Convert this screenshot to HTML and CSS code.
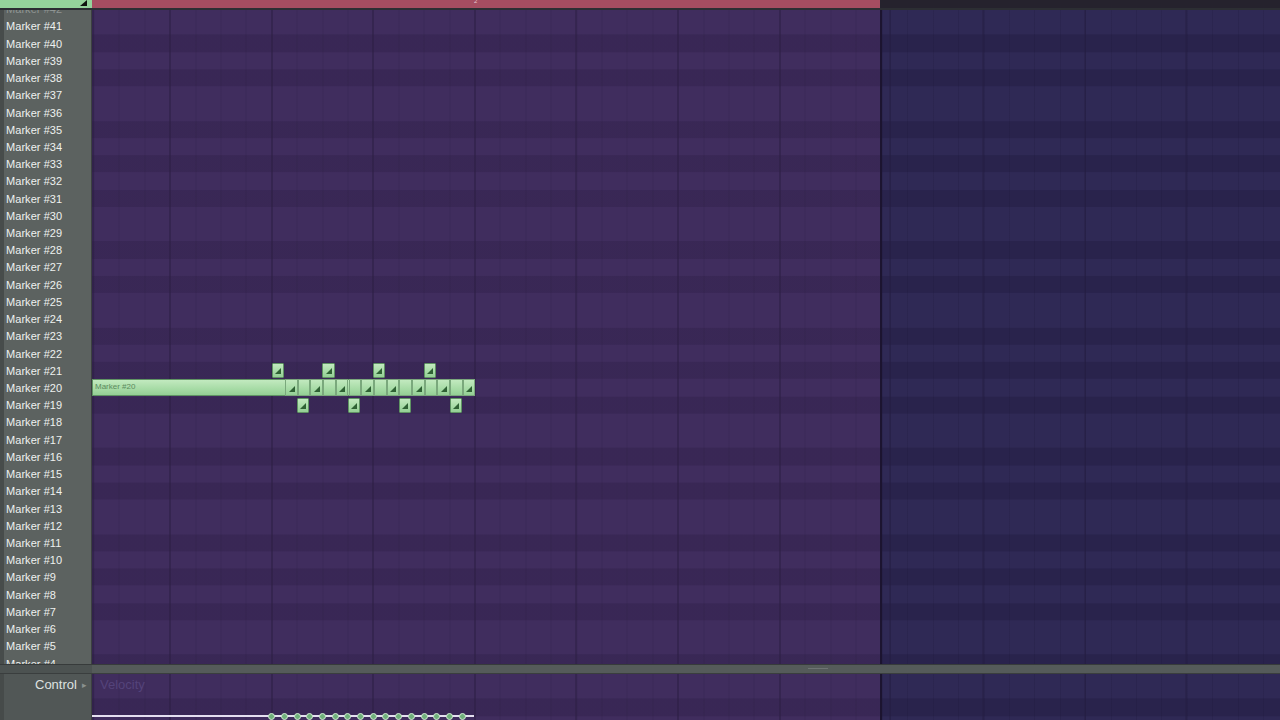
FILE: index.html
```html
<!DOCTYPE html>
<html>
<head>
<meta charset="utf-8">
<link rel="stylesheet" href="styles.css">
</head>
<body>
<div class="app">
  <div class="topbar">
    <div class="tb-left"><span class="tb-tri"></span></div>
    <div class="tb-song"><span class="tb-num">2</span></div>
    <div class="tb-rest"></div>
  </div>
  <div class="sep"></div>
  <div class="main">
    <div class="keys">
      <div class="key-list" id="keys"></div>
    </div>
    <div class="grid">
      <div class="pane pane-song"></div>
      <div class="pane pane-rest"></div>
      <div class="notes" id="notes">
        <div class="note long"><span class="note-label">Marker #20</span></div>
      </div>
    </div>
  </div>
  <div class="scroll"><div class="scroll-left"></div><div class="scroll-track"><span class="grip"></span></div></div>
  <div class="control">
    <div class="ctl-label"><span class="ctl-text">Control</span><span class="ctl-arrow">▸</span></div>
    <div class="vel">
      <div class="pane pane-song"></div>
      <div class="pane pane-rest"></div>
      <span class="vel-title">Velocity</span>
      <div class="vel-line"></div>
      <div class="vel-dots" id="dots"></div>
    </div>
  </div>
</div>
<script src="app.js"></script>
</body>
</html>
```
FILE: app.js
```js
(function () {
  var keys = document.getElementById('keys');
  for (var n = 42; n >= 4; n--) {
    var d = document.createElement('div');
    d.className = 'key';
    d.textContent = 'Marker #' + n;
    keys.appendChild(d);
  }
  var notes = document.getElementById('notes');
  function add(cls, left, top) {
    var e = document.createElement('div');
    e.className = 'note ' + cls;
    e.style.left = left + 'px';
    e.style.top = top + 'px';
    notes.appendChild(e);
  }
  var step = 12.7;
  for (var i = 0; i < 15; i++) {
    add(i % 2 === 0 ? 'cell tri' : 'cell', 193 + i * step, 369);
  }
  [179.6, 230.4, 281.2, 332].forEach(function (x) { add('short tri', x, 353); });
  [205.2, 256, 306.8, 357.6].forEach(function (x) { add('short tri', x, 388); });
  var dots = document.getElementById('dots');
  for (var j = 0; j < 16; j++) {
    var c = document.createElement('span');
    c.className = 'dot';
    c.style.left = (179.6 + j * step - 3.5) + 'px';
    dots.appendChild(c);
  }
})();
```
FILE: styles.css
```css
html, body {
  margin: 0;
  padding: 0;
  width: 1280px;
  height: 720px;
  overflow: hidden;
  background: #2a2a2e;
  font-family: "Liberation Sans", Arial, sans-serif;
}
.app {
  display: flex;
  flex-direction: column;
  width: 1280px;
  height: 720px;
}
.topbar {
  display: flex;
  height: 8px;
}
.tb-left {
  width: 92px;
  background: #95d49c;
  position: relative;
}
.tb-tri {
  position: absolute;
  right: 5px;
  top: 0;
  width: 0;
  height: 0;
  border-left: 7px solid transparent;
  border-bottom: 6px solid #101410;
}
.tb-song {
  width: 788px;
  background: #a54d61;
  position: relative;
}
.tb-num {
  position: absolute;
  left: 382px;
  top: -2px;
  font-size: 6px;
  color: #e6c4cc;
}
.tb-rest {
  flex: 1;
  background: #25222d;
}
.sep {
  height: 2px;
  background: #2c2e33;
}
.main {
  display: flex;
  height: 654px;
  overflow: hidden;
}
.keys {
  width: 87px;
  border-left: 4px solid #474c4b;
  border-right: 1px solid #3c4140;
  background: #5c6260;
  overflow: hidden;
}
.key-list {
  margin-top: -8.8px;
  display: flex;
  flex-direction: column;
}
.key {
  height: 17.22px;
  line-height: 17.22px;
  padding-left: 2px;
  font-size: 11px;
  color: #eef1ef;
  white-space: nowrap;
  letter-spacing: 0.05px;
}
.key:first-child {
  color: #8f9593;
}
.grid {
  flex: 1;
  display: flex;
  position: relative;
}
.pane {
  height: 100%;
}
.pane-song {
  width: 788px;
  background:
    repeating-linear-gradient(to right, #2c1f44 0, #2c1f44 1px, transparent 1px, transparent 101.6px),
    repeating-linear-gradient(to right, rgba(30,20,50,0.14) 0, rgba(30,20,50,0.14) 1px, transparent 1px, transparent 25.4px),
    linear-gradient(to bottom,
      transparent 0, transparent 17.22px,
      rgba(20,10,40,0.16) 17.22px, rgba(20,10,40,0.16) 34.44px,
      transparent 34.44px, transparent 51.66px,
      rgba(20,10,40,0.16) 51.66px, rgba(20,10,40,0.16) 68.88px,
      transparent 68.88px, transparent 103.32px,
      rgba(20,10,40,0.16) 103.32px, rgba(20,10,40,0.16) 120.54px,
      transparent 120.54px, transparent 137.76px,
      rgba(20,10,40,0.16) 137.76px, rgba(20,10,40,0.16) 154.98px,
      transparent 154.98px, transparent 172.2px,
      rgba(20,10,40,0.16) 172.2px, rgba(20,10,40,0.16) 189.42px,
      transparent 189.42px, transparent 206.64px),
    #402d5e;
  background-size: auto, auto, 100% 206.64px, auto;
  background-position: 77.5px 0, 1.5px 0, 0 7.4px, 0 0;
}
.pane-rest {
  flex: 1;
  border-left: 2px solid #1c1430;
  background:
    repeating-linear-gradient(to right, #241d42 0, #241d42 1px, transparent 1px, transparent 101.6px),
    repeating-linear-gradient(to right, rgba(20,15,45,0.14) 0, rgba(20,15,45,0.14) 1px, transparent 1px, transparent 25.4px),
    linear-gradient(to bottom,
      transparent 0, transparent 17.22px,
      rgba(15,10,40,0.2) 17.22px, rgba(15,10,40,0.2) 34.44px,
      transparent 34.44px, transparent 51.66px,
      rgba(15,10,40,0.2) 51.66px, rgba(15,10,40,0.2) 68.88px,
      transparent 68.88px, transparent 103.32px,
      rgba(15,10,40,0.2) 103.32px, rgba(15,10,40,0.2) 120.54px,
      transparent 120.54px, transparent 137.76px,
      rgba(15,10,40,0.2) 137.76px, rgba(15,10,40,0.2) 154.98px,
      transparent 154.98px, transparent 172.2px,
      rgba(15,10,40,0.2) 172.2px, rgba(15,10,40,0.2) 189.42px,
      transparent 189.42px, transparent 206.64px),
    #2f2955;
  background-size: auto, auto, 100% 206.64px, auto;
  background-position: 100.6px 0, 0 0, 0 7.4px, 0 0;
}
.notes {
  position: absolute;
  inset: 0;
}
.note {
  position: absolute;
  box-sizing: border-box;
  background: linear-gradient(to bottom, #c2e9bf 0%, #a6dba5 60%, #94cf95 100%);
  border: 1px solid #5f9463;
}
.note.long {
  left: 0;
  top: 369px;
  width: 383px;
  height: 17px;
}
.note-label {
  position: absolute;
  left: 2px;
  top: 2px;
  font-size: 8px;
  line-height: 10px;
  color: #5b8a5e;
}
.note.cell {
  width: 12.7px;
  height: 17px;
  border-color: #7aa87c;
}
.note.short {
  width: 12.2px;
  height: 15px;
  border-radius: 1px;
}
.note.tri::after {
  content: "";
  position: absolute;
  right: 2px;
  bottom: 3px;
  width: 0;
  height: 0;
  border-left: 6px solid transparent;
  border-bottom: 6px solid #2f6234;
}
.scroll {
  display: flex;
  height: 10px;
  box-sizing: border-box;
  border-top: 1px solid #373b3b;
  border-bottom: 1px solid #3a3e3e;
  background: #555b5a;
}
.scroll-left {
  width: 92px;
  background: #4c5251;
}
.scroll-track {
  flex: 1;
  position: relative;
}
.grip {
  position: absolute;
  left: 716px;
  top: 3px;
  width: 20px;
  height: 1px;
  background: #6e7473;
}
.control {
  display: flex;
  height: 46px;
}
.ctl-label {
  width: 87px;
  border-left: 4px solid #464b4a;
  border-right: 1px solid #3c4140;
  background: #515756;
  display: flex;
  align-items: flex-start;
  padding-top: 3px;
  box-sizing: content-box;
}
.ctl-text {
  margin-left: 31px;
  font-size: 13px;
  line-height: 16px;
  color: #dfe2e0;
}
.ctl-arrow {
  margin-left: 5px;
  font-size: 9px;
  line-height: 16px;
  color: #8a908e;
}
.vel {
  flex: 1;
  display: flex;
  position: relative;
}
.vel-title {
  position: absolute;
  left: 8px;
  top: 3px;
  font-size: 13px;
  line-height: 16px;
  color: #54437a;
}
.vel-line {
  position: absolute;
  left: 0;
  top: 41px;
  width: 382px;
  height: 2px;
  background: #e4dff0;
}
.vel-dots {
  position: absolute;
  inset: 0;
}
.dot {
  position: absolute;
  top: 38.5px;
  width: 7px;
  height: 7px;
  box-sizing: border-box;
  border-radius: 50%;
  background: #6faf7b;
  border: 1.5px solid #d2ecd3;
}
```
